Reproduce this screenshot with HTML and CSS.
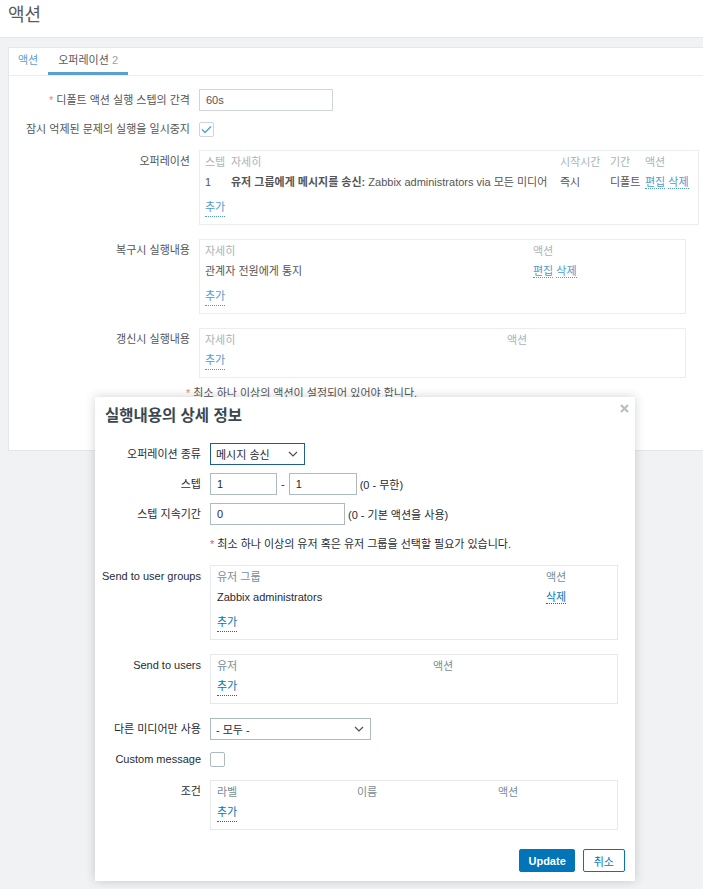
FILE: index.html
```html
<html>

<head>
    <link rel="stylesheet" href="styles.css">
</head>

<body>
    <div class="page-header">
        <h1>액션</h1>
    </div>
    <div class="panel">
        <ul class="tabs">
            <li>액션</li>
            <li class="active">오퍼레이션 <span class="count">2</span></li>
        </ul>
        <div class="form">
            <div class="row">
                <div class="lbl"><span><span class="req">*</span> 디폴트 액션 실행 스텝의 간격</span></div>
                <input class="text w134" type="text" value="60s">
            </div>
            <div class="row tight">
                <div class="lbl"><span>잠시 억제된 문제의 실행을 일시중지</span></div>
                <div class="check">
                    <svg width="11" height="9" viewBox="0 0 11 9"><path d="M1 4.5 L4 7.5 L10 1.5" fill="none" stroke="#5a9fd4" stroke-width="1.5"/></svg>
                </div>
            </div>
            <div class="row top">
                <div class="lbl"><span>오퍼레이션</span></div>
                <div class="box w500">
                    <div class="tr head">
                        <span class="c26">스텝</span><span class="c329">자세히</span><span class="c50">시작시간</span><span class="c35">기간</span><span>액션</span>
                    </div>
                    <div class="tr data">
                        <span class="c26">1</span><span class="c329"><b>유저 그룹에게 메시지를 송신:</b> Zabbix administrators via 모든 미디어</span><span class="c50">즉시</span><span class="c35">디폴트</span><span><a>편집</a> <a>삭제</a></span>
                    </div>
                    <div class="tr add"><a>추가</a></div>
                </div>
            </div>
            <div class="row wide top">
                <div class="lbl"><span>복구시 실행내용</span></div>
                <div class="box w487">
                    <div class="tr head"><span class="c328">자세히</span><span>액션</span></div>
                    <div class="tr data"><span class="c328">관계자 전원에게 통지</span><span><a>편집</a> <a>삭제</a></span></div>
                    <div class="tr add"><a>추가</a></div>
                </div>
            </div>
            <div class="row wide top">
                <div class="lbl"><span>갱신시 실행내용</span></div>
                <div class="box w487">
                    <div class="tr head"><span class="c302">자세히</span><span>액션</span></div>
                    <div class="tr"><a>추가</a></div>
                </div>
            </div>
            <div class="note"><span class="req">*</span> 최소 하나 이상의 액션이 설정되어 있어야 합니다.</div>
        </div>
    </div>

    <div class="dialog">
        <div class="dialog-head">
            <h4>실행내용의 상세 정보</h4>
            <svg class="close" width="9" height="9" viewBox="0 0 9 9"><path d="M1 1 L8 8 M8 1 L1 8" stroke="#b4c0c6" stroke-width="2.2"/></svg>
        </div>
        <div class="dialog-form">
            <div class="row">
                <div class="lbl"><span>오퍼레이션 종류</span></div>
                <div class="select focus w95"><span>메시지 송신</span>
                    <svg width="10" height="6" viewBox="0 0 10 6"><path d="M1 1 L5 5 L9 1" fill="none" stroke="#4f4f4f" stroke-width="1.2"/></svg>
                </div>
            </div>
            <div class="row">
                <div class="lbl"><span>스텝</span></div>
                <input class="text w67" type="text" value="1">
                <span class="dash">-</span>
                <input class="text w68" type="text" value="1">
                <span class="hint">(0 - 무한)</span>
            </div>
            <div class="row">
                <div class="lbl"><span>스텝 지속기간</span></div>
                <input class="text w135" type="text" value="0">
                <span class="hint">(0 - 기본 액션을 사용)</span>
            </div>
            <div class="row warn">
                <div class="lbl"></div>
                <div><span class="req">*</span> 최소 하나 이상의 유저 혹은 유저 그룹을 선택할 필요가 있습니다.</div>
            </div>
            <div class="row top">
                <div class="lbl"><span>Send to user groups</span></div>
                <div class="box w408">
                    <div class="tr head"><span class="c329">유저 그룹</span><span>액션</span></div>
                    <div class="tr data"><span class="c329">Zabbix administrators</span><span><a>삭제</a></span></div>
                    <div class="tr add"><a>추가</a></div>
                </div>
            </div>
            <div class="row wide top">
                <div class="lbl"><span>Send to users</span></div>
                <div class="box w408">
                    <div class="tr head"><span class="c216">유저</span><span>액션</span></div>
                    <div class="tr"><a>추가</a></div>
                </div>
            </div>
            <div class="row wide">
                <div class="lbl"><span>다른 미디어만 사용</span></div>
                <div class="select w161"><span>- 모두 -</span>
                    <svg width="10" height="6" viewBox="0 0 10 6"><path d="M1 1 L5 5 L9 1" fill="none" stroke="#4f4f4f" stroke-width="1.2"/></svg>
                </div>
            </div>
            <div class="row">
                <div class="lbl"><span>Custom message</span></div>
                <div class="check"></div>
            </div>
            <div class="row cond top">
                <div class="lbl"><span>조건</span></div>
                <div class="box w408">
                    <div class="tr head"><span class="c140">라벨</span><span class="c141">이름</span><span>액션</span></div>
                    <div class="tr"><a>추가</a></div>
                </div>
            </div>
        </div>
        <div class="dialog-foot">
            <button class="btn primary">Update</button>
            <button class="btn alt">취소</button>
        </div>
    </div>
</body>

</html>
```

FILE: styles.css
```css
body {
    margin: 0;
    height: 889px;
    overflow: hidden;
    background: #f0f2f4;
    color: #555;
    font-size: 11px;
    font-family: "Liberation Sans", "Noto Sans CJK KR", sans-serif;
}

a {
    color: #4f9bd0;
    border-bottom: 1px dotted #4f9bd0;
}

.page-header {
    height: 37px;
    background: #fff;
    border-bottom: 1px solid #e4e7ea;
}

.page-header h1 {
    margin: 0;
    padding: 0 8px;
    font-size: 18px;
    font-weight: normal;
    line-height: 30px;
    color: #5a5a5a;
}

.panel {
    margin: 9px 0 0 8px;
    width: 720px;
    height: 404px;
    box-sizing: border-box;
    background: #fff;
    border: 1px solid #e4e7ea;
}

.tabs {
    display: flex;
    margin: 0 0 0 -1px;
    padding: 0;
    list-style: none;
    height: 27px;
    border-bottom: 1px solid #ebeef0;
}

.tabs li {
    padding: 0 10px;
    line-height: 24px;
    border-bottom: 3px solid transparent;
    color: #5aa0d0;
}

.tabs li.active {
    color: #5a5a5a;
    border-bottom-color: #5aa0d0;
}

.tabs .count {
    color: #9aa5ab;
}

.form {
    padding-top: 13px;
}

.row {
    display: flex;
    align-items: center;
}

.row.top {
    align-items: flex-start;
}

.form .row.tight {
    margin-top: 7px;
}

.form .row.top {
    margin-top: 10px;
}

.row.wide,
.form .row.wide {
    margin-top: 14px;
}

.lbl {
    flex: none;
    display: flex;
    justify-content: flex-end;
    white-space: nowrap;
    line-height: 22px;
}

.form .lbl {
    width: 181px;
    margin-right: 9px;
}

.req {
    color: #e88585;
}

.text {
    display: block;
    height: 22px;
    box-sizing: border-box;
    padding: 0 6px;
    border: 1px solid #cfd6da;
    font: inherit;
    color: #555;
    background: #fff;
    outline: none;
}

.w134 { width: 134px; }
.w67 { width: 67px; }
.w68 { width: 68px; }
.w135 { width: 135px; }
.w95 { width: 95px; }
.w161 { width: 161px; }
.w500 { width: 500px; }
.w487 { width: 487px; }
.w408 { width: 408px; }

.check {
    width: 15px;
    height: 15px;
    box-sizing: border-box;
    border: 1px solid #cfd6da;
    border-radius: 2px;
    display: flex;
    align-items: center;
    justify-content: center;
}

.box {
    box-sizing: border-box;
    border: 1px solid #ebeef0;
    padding: 1px 5px 7px;
}

.tr {
    display: flex;
    height: 20px;
    line-height: 20px;
    white-space: nowrap;
}

.tr span {
    flex: none;
}

.tr.head {
    color: #a8b3b9;
}

.tr.data {
    margin-bottom: 5px;
}

.c26 { width: 26px; }
.c329 { width: 329px; }
.c328 { width: 328px; }
.c302 { width: 302px; }
.c50 { width: 50px; }
.c35 { width: 35px; }
.c216 { width: 216px; }
.c140 { width: 140px; }
.c141 { width: 141px; }

.note {
    margin: 8px 0 0 177px;
    line-height: 14px;
}

.dialog {
    position: absolute;
    left: 95px;
    top: 397px;
    width: 540px;
    box-sizing: border-box;
    background: #fff;
    box-shadow: 0 0 10px rgba(0, 0, 0, 0.18);
    color: #1f2c33;
}

.dialog a {
    color: #0275b8;
    border-bottom-color: #0275b8;
}

.dialog-head {
    position: relative;
    padding: 10px;
}

.dialog-head h4 {
    margin: 0;
    font-size: 15.5px;
    font-weight: bold;
    line-height: 18px;
    color: #3a4750;
}

.close {
    position: absolute;
    top: 7px;
    right: 6px;
}

.dialog-form {
    padding: 8px 10px 0;
}

.dialog-form .row {
    margin-top: 8px;
}

.dialog-form .row:first-child {
    margin-top: 0;
}

.dialog-form .row.wide {
    margin-top: 14px;
}

.dialog-form .row.cond {
    margin-top: 10px;
}

.dialog-form .lbl {
    width: 96px;
    margin-right: 9px;
    color: #1f2c33;
}

.dialog .text {
    border-color: #acbbc2;
    color: #1f2c33;
}

.dialog .check {
    border-color: #acbbc2;
}

.dialog .box {
    padding: 1px 6px 7px;
    border-color: #e6eaec;
}

.dialog .tr.head {
    color: #768d99;
}

.row.warn {
    height: 24px;
    align-items: flex-start;
}

.row.warn > div:last-child {
    padding-top: 1px;
    line-height: 20px;
}

.dialog .req {
    color: #e45959;
}

.select {
    height: 22px;
    box-sizing: border-box;
    border: 1px solid #acbbc2;
    padding: 0 6px 0 5px;
    display: flex;
    align-items: center;
    justify-content: space-between;
}

.select.focus {
    border-color: #1f5f8f;
}

.dash {
    margin: 0 4px;
}

.hint {
    margin-left: 3px;
}

.dialog-foot {
    display: flex;
    justify-content: flex-end;
    gap: 8px;
    padding: 19px 10px 9px;
}

.btn {
    height: 23px;
    box-sizing: border-box;
    border: 1px solid #0275b8;
    border-radius: 2px;
    padding: 0 8px;
    font: inherit;
    font-weight: bold;
}

.btn.primary {
    background: #0275b8;
    color: #fff;
}

.btn.alt {
    background: #fff;
    color: #0275b8;
    font-weight: normal;
    padding: 0 10px;
}
```
